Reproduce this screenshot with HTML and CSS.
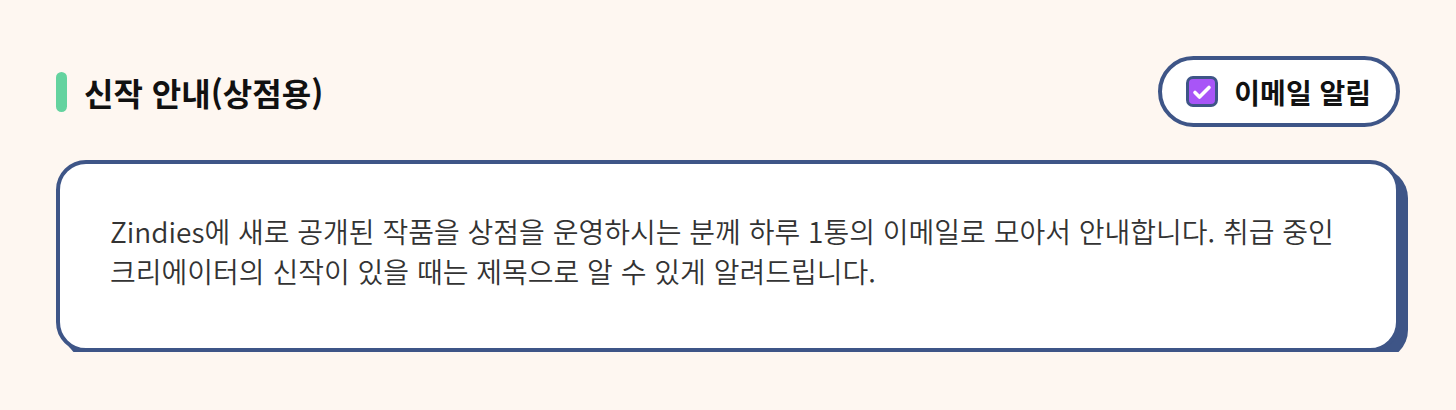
FILE: index.html
```html
<!DOCTYPE html>
<html lang="ko">
<head>
<meta charset="utf-8">
<link rel="stylesheet" href="styles.css">
</head>
<body>
<div class="page">
  <div class="header">
    <h2 class="title"><span class="bar"></span>신작 안내(상점용)</h2>
    <label class="toggle">
      <span class="check">
        <svg viewBox="0 0 24 24" width="24" height="24"><path d="M5 12.5l4.5 4.5L19 7.5" fill="none" stroke="#fff" stroke-width="3.6" stroke-linecap="round" stroke-linejoin="round"/></svg>
      </span>
      <span class="toggle-text">이메일 알림</span>
    </label>
  </div>
  <div class="card">
    <p class="desc">Zindies에 새로 공개된 작품을 상점을 운영하시는 분께 하루 1통의 이메일로 모아서 안내합니다. 취급 중인 크리에이터의 신작이 있을 때는 제목으로 알 수 있게 알려드립니다.</p>
  </div>
</div>
</body>
</html>
```
FILE: styles.css
```css
html, body {
  margin: 0;
  padding: 0;
  background: #fef7f1;
}
body {
  font-family: "Noto Sans CJK KR", "Noto Sans", sans-serif;
  color: #111;
}
.page {
  padding: 56px 56px 0 56px;
}
.header {
  display: flex;
  align-items: center;
  justify-content: space-between;
  height: 71px;
}
.title {
  display: flex;
  align-items: center;
  margin: 0;
  font-size: 32px;
  font-weight: 700;
}
.bar {
  display: inline-block;
  width: 11px;
  height: 40px;
  border-radius: 6px;
  background: #64d39f;
  margin-right: 17px;
}
.toggle {
  display: flex;
  align-items: center;
  gap: 16px;
  box-sizing: border-box;
  height: 71px;
  padding: 0 25px 0 24px;
  border: 4px solid #3e5587;
  border-radius: 36px;
  background: #fff;
}
.check {
  display: flex;
  align-items: center;
  justify-content: center;
  box-sizing: border-box;
  width: 32px;
  height: 31px;
  border: 3px solid #3e5587;
  border-radius: 7px;
  background: #a855f7;
}
.toggle-text {
  font-size: 28px;
  font-weight: 700;
}
.card {
  margin-top: 33px;
  box-sizing: border-box;
  height: 192px;
  border: 4px solid #3e5587;
  border-radius: 30px;
  background: #fff;
  box-shadow: 8px 8px 0 #3e5587;
  padding: 47px 39px 0 50px;
}
.desc {
  margin: 0;
  font-size: 28px;
  font-weight: 350;
  line-height: 40px;
  color: #333;
}
```
